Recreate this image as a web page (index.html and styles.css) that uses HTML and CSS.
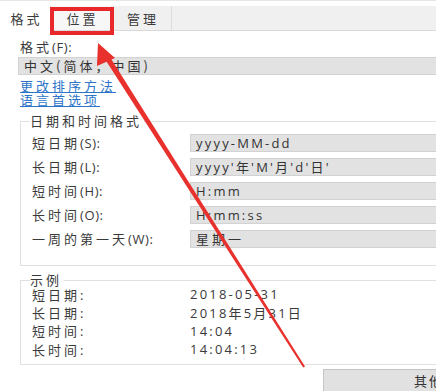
FILE: index.html
```html
<!DOCTYPE html>
<html lang="zh-CN">
<head>
    <meta charset="UTF-8">
    <title>区域</title>
    <link rel="stylesheet" href="styles.css">
</head>
<body>
    <div class="window">
        <div class="tabs">
            <div class="tab active">格式</div>
            <div class="tab">位置</div>
            <div class="tab">管理</div>
        </div>
        <div class="panel">
            <div class="field-label">格式<span class="key">(F):</span></div>
            <div class="combo wide">中文(简体，中国)</div>
            <a class="link first" href="#">更改排序方法</a>
            <a class="link" href="#">语言首选项</a>

            <fieldset class="group formats">
                <legend>日期和时间格式</legend>
                <div class="row"><span class="label">短日期<span class="key">(S):</span></span><div class="combo latin">yyyy-MM-dd</div></div>
                <div class="row"><span class="label">长日期<span class="key">(L):</span></span><div class="combo latin">yyyy'年'M'月'd'日'</div></div>
                <div class="row"><span class="label">短时间<span class="key">(H):</span></span><div class="combo latin">H:mm</div></div>
                <div class="row"><span class="label">长时间<span class="key">(O):</span></span><div class="combo latin">H:mm:ss</div></div>
                <div class="row"><span class="label">一周的第一天<span class="key">(W):</span></span><div class="combo">星期一</div></div>
            </fieldset>

            <fieldset class="group sample">
                <legend>示例</legend>
                <div class="row small"><span class="label">短日期<span class="key">:</span></span><span class="value">2018-05-31</span></div>
                <div class="row small"><span class="label">长日期<span class="key">:</span></span><span class="value">2018年5月31日</span></div>
                <div class="row small"><span class="label">短时间<span class="key">:</span></span><span class="value">14:04</span></div>
                <div class="row small"><span class="label">长时间<span class="key">:</span></span><span class="value">14:04:13</span></div>
            </fieldset>

            <div class="actions">
                <button class="btn">其他设置(D)...</button>
            </div>
        </div>
    </div>

    <svg class="marks" width="436" height="391" viewBox="0 0 436 391">
        <rect x="52" y="9" width="60" height="24" fill="none" stroke="#e8282b" stroke-width="4"/>
        <polygon points="105.5,50 101,53 303.2,367.5 305,366.5" fill="#e8302c"/>
        <polygon points="98,43 97,66 115,58" fill="#e8302c"/>
    </svg>
</body>
</html>
```
FILE: styles.css
```css
html, body {
    margin: 0;
    padding: 0;
}

body {
    width: 436px;
    height: 391px;
    overflow: hidden;
    position: relative;
    background-color: #ffffff;
    font-family: "Noto Sans CJK SC", "Noto Sans", sans-serif;
    font-size: 13px;
    letter-spacing: 3px;
    color: #3a3a3a;
}

.window {
    width: 600px;
    border-top: 1px solid #e6e6e6;
    padding-top: 5px;
}

.tabs {
    display: flex;
    height: 24px;
    background-color: #f0f0f0;
    border-bottom: 1px solid #dadada;
}

.tab {
    height: 24px;
    line-height: 26px;
    text-align: center;
    border-right: 1px solid #dcdcdc;
    padding-left: 3px;
    box-sizing: border-box;
}

.tab:nth-child(1) {
    width: 51px;
}

.tab:nth-child(2) {
    width: 61px;
    background-color: #f7f7f7;
}

.tab:nth-child(3) {
    width: 60px;
}

.tab.active {
    background-color: #ffffff;
    height: 25px;
}

.panel {
    padding-left: 18px;
}

.field-label {
    margin-top: 8px;
    padding-left: 2px;
    height: 16px;
    line-height: 16px;
}

.key {
    font-family: "Open Sans", sans-serif;
    letter-spacing: 0.6px;
}

.combo {
    height: 16px;
    line-height: 16px;
    background-color: #e2e2e2;
    border: 1px solid #d2d2d2;
    padding-left: 5px;
    color: #333;
    white-space: nowrap;
}

.combo.wide {
    margin-top: 2px;
}

.combo.latin,
.value {
    font-family: "Open Sans", "Noto Sans CJK SC", sans-serif;
    letter-spacing: 2.2px;
}

.link {
    display: block;
    width: max-content;
    margin-left: 2px;
    height: 14px;
    line-height: 14px;
    color: #2c74c8;
}

.link.first {
    margin-top: 4px;
}

.group {
    margin: 7px 0 0 2px;
    padding: 5px 0 17px 11px;
    border: 1px solid #e0e0e0;
    min-width: 0;
}

.group legend {
    padding: 0 2px 0 0;
    margin-left: -2px;
    height: 14px;
    line-height: 14px;
}

.row {
    display: flex;
    align-items: center;
    margin-bottom: 5px;
}

.row:last-child {
    margin-bottom: 0;
}

.row .label {
    width: 158px;
    flex: none;
}

.row .combo {
    flex: 1;
}

.sample {
    padding-top: 0;
    padding-bottom: 5px;
}

.row.small {
    margin-bottom: 0;
    height: 18.4px;
}

.row.small:first-of-type {
    margin-top: -2px;
}

.actions {
    padding: 4px 0 0 305px;
}

.btn {
    width: 220px;
    height: 24px;
    background-color: #e1e1e1;
    border: 1px solid #c4c4c4;
    font-family: inherit;
    font-size: 13px;
    letter-spacing: 2px;
    color: #333;
    text-align: left;
    padding-left: 90px;
}

.marks {
    position: absolute;
    top: 0;
    left: 0;
}
```
